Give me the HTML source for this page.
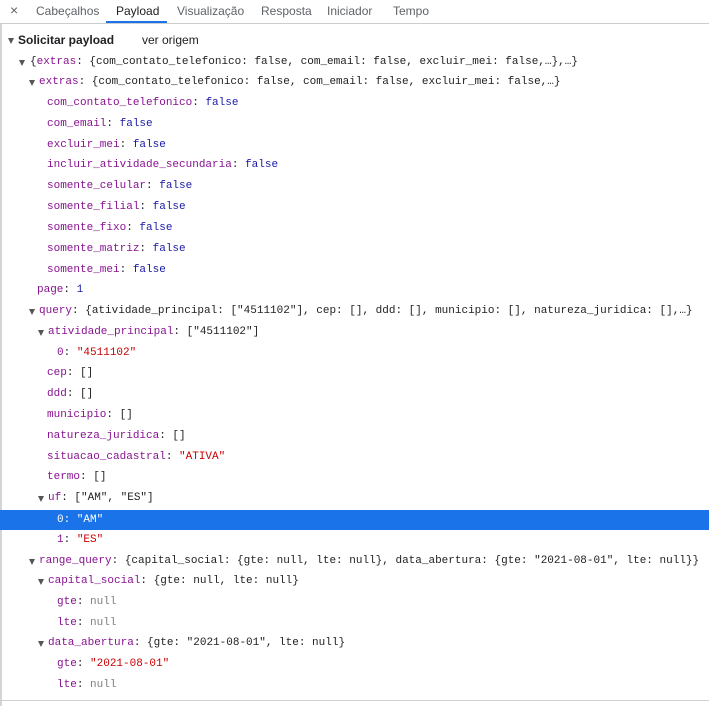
<!DOCTYPE html>
<html><head><meta charset="utf-8"><style>
html,body{margin:0;padding:0;width:709px;height:706px;background:#fff;overflow:hidden;position:relative;font-family:"Liberation Sans",sans-serif}
.tabs{position:absolute;left:0;top:0;width:709px;height:23px;background:#fff;border-bottom:1px solid #cbcdd1}
.tab{position:absolute;top:4px;font-size:12px;color:#5f6368}
.act{color:#202124}
.ul{position:absolute;left:106px;top:21px;width:61px;height:2px;background:#1a73e8}
.lb{position:absolute;left:0;top:24px;width:2px;height:682px;background:#d5d5d5}
.bb{position:absolute;left:0;top:700px;width:709px;height:1px;background:#d0d0d0}
.r{position:absolute;left:0;width:709px;height:21px;font-family:"Liberation Mono",monospace;font-size:11px;line-height:21px;white-space:pre;color:#222}
.k{color:#881391}.f{color:#1a1aa6}.s{color:#c80000}.n{color:#808080}
.t{position:absolute;top:8px;width:0;height:0;border-left:3.5px solid transparent;border-right:3.5px solid transparent;border-top:6px solid #555}
.sel{background:#1a73e8}.sel span{color:#fff!important}
</style></head><body>
<div class="tabs">
<span class="tab" style="left:10px;font-size:14px;top:2px">×</span>
<span class="tab" style="left:36px">Cabeçalhos</span>
<span class="tab act" style="left:116px">Payload</span>
<span class="tab" style="left:177px">Visualização</span>
<span class="tab" style="left:261px">Resposta</span>
<span class="tab" style="left:327px">Iniciador</span>
<span class="tab" style="left:393px">Tempo</span>
<div class="ul"></div>
</div>
<div class="lb"></div>
<div class="t" style="left:8px;top:38px"></div>
<div style="position:absolute;left:18px;top:33px;font-size:12px;font-weight:bold;color:#202124">Solicitar payload</div>
<div style="position:absolute;left:142px;top:33px;font-size:12px;color:#202124">ver origem</div>

<div class="r" style="top:52px"><i class="t" style="left:19px"></i><span style="position:absolute;left:30px">{<span class="k">extras</span>: {com_contato_telefonico: false, com_email: false, excluir_mei: false,…},…}</span></div>
<div class="r" style="top:72px"><i class="t" style="left:29px"></i><span style="position:absolute;left:39px"><span class="k">extras</span>: {com_contato_telefonico: false, com_email: false, excluir_mei: false,…}</span></div>
<div class="r" style="top:93px"><span style="position:absolute;left:47px"><span class="k">com_contato_telefonico</span>: <span class="f">false</span></span></div>
<div class="r" style="top:114px"><span style="position:absolute;left:47px"><span class="k">com_email</span>: <span class="f">false</span></span></div>
<div class="r" style="top:135px"><span style="position:absolute;left:47px"><span class="k">excluir_mei</span>: <span class="f">false</span></span></div>
<div class="r" style="top:155px"><span style="position:absolute;left:47px"><span class="k">incluir_atividade_secundaria</span>: <span class="f">false</span></span></div>
<div class="r" style="top:176px"><span style="position:absolute;left:47px"><span class="k">somente_celular</span>: <span class="f">false</span></span></div>
<div class="r" style="top:197px"><span style="position:absolute;left:47px"><span class="k">somente_filial</span>: <span class="f">false</span></span></div>
<div class="r" style="top:218px"><span style="position:absolute;left:47px"><span class="k">somente_fixo</span>: <span class="f">false</span></span></div>
<div class="r" style="top:239px"><span style="position:absolute;left:47px"><span class="k">somente_matriz</span>: <span class="f">false</span></span></div>
<div class="r" style="top:260px"><span style="position:absolute;left:47px"><span class="k">somente_mei</span>: <span class="f">false</span></span></div>
<div class="r" style="top:280px"><span style="position:absolute;left:37px"><span class="k">page</span>: <span class="f">1</span></span></div>
<div class="r" style="top:301px"><i class="t" style="left:29px"></i><span style="position:absolute;left:39px"><span class="k">query</span>: {atividade_principal: ["4511102"], cep: [], ddd: [], municipio: [], natureza_juridica: [],…}</span></div>
<div class="r" style="top:322px"><i class="t" style="left:38px"></i><span style="position:absolute;left:48px"><span class="k">atividade_principal</span>: ["4511102"]</span></div>
<div class="r" style="top:343px"><span style="position:absolute;left:57px"><span class="k">0</span>: <span class="s">"4511102"</span></span></div>
<div class="r" style="top:363px"><span style="position:absolute;left:47px"><span class="k">cep</span>: []</span></div>
<div class="r" style="top:384px"><span style="position:absolute;left:47px"><span class="k">ddd</span>: []</span></div>
<div class="r" style="top:405px"><span style="position:absolute;left:47px"><span class="k">municipio</span>: []</span></div>
<div class="r" style="top:426px"><span style="position:absolute;left:47px"><span class="k">natureza_juridica</span>: []</span></div>
<div class="r" style="top:447px"><span style="position:absolute;left:47px"><span class="k">situacao_cadastral</span>: <span class="s">"ATIVA"</span></span></div>
<div class="r" style="top:467px"><span style="position:absolute;left:47px"><span class="k">termo</span>: []</span></div>
<div class="r" style="top:488px"><i class="t" style="left:38px"></i><span style="position:absolute;left:48px"><span class="k">uf</span>: ["AM", "ES"]</span></div>
<div class="r sel" style="top:510px;height:20px;line-height:20px"><span style="position:absolute;left:57px">0: "AM"</span></div>
<div class="r" style="top:530px"><span style="position:absolute;left:57px"><span class="k">1</span>: <span class="s">"ES"</span></span></div>
<div class="r" style="top:551px"><i class="t" style="left:29px"></i><span style="position:absolute;left:39px"><span class="k">range_query</span>: {capital_social: {gte: null, lte: null}, data_abertura: {gte: "2021-08-01", lte: null}}</span></div>
<div class="r" style="top:571px"><i class="t" style="left:38px"></i><span style="position:absolute;left:48px"><span class="k">capital_social</span>: {gte: null, lte: null}</span></div>
<div class="r" style="top:592px"><span style="position:absolute;left:57px"><span class="k">gte</span>: <span class="n">null</span></span></div>
<div class="r" style="top:613px"><span style="position:absolute;left:57px"><span class="k">lte</span>: <span class="n">null</span></span></div>
<div class="r" style="top:633px"><i class="t" style="left:38px"></i><span style="position:absolute;left:48px"><span class="k">data_abertura</span>: {gte: "2021-08-01", lte: null}</span></div>
<div class="r" style="top:654px"><span style="position:absolute;left:57px"><span class="k">gte</span>: <span class="s">"2021-08-01"</span></span></div>
<div class="r" style="top:675px"><span style="position:absolute;left:57px"><span class="k">lte</span>: <span class="n">null</span></span></div>
<div class="bb"></div>
</body></html>
